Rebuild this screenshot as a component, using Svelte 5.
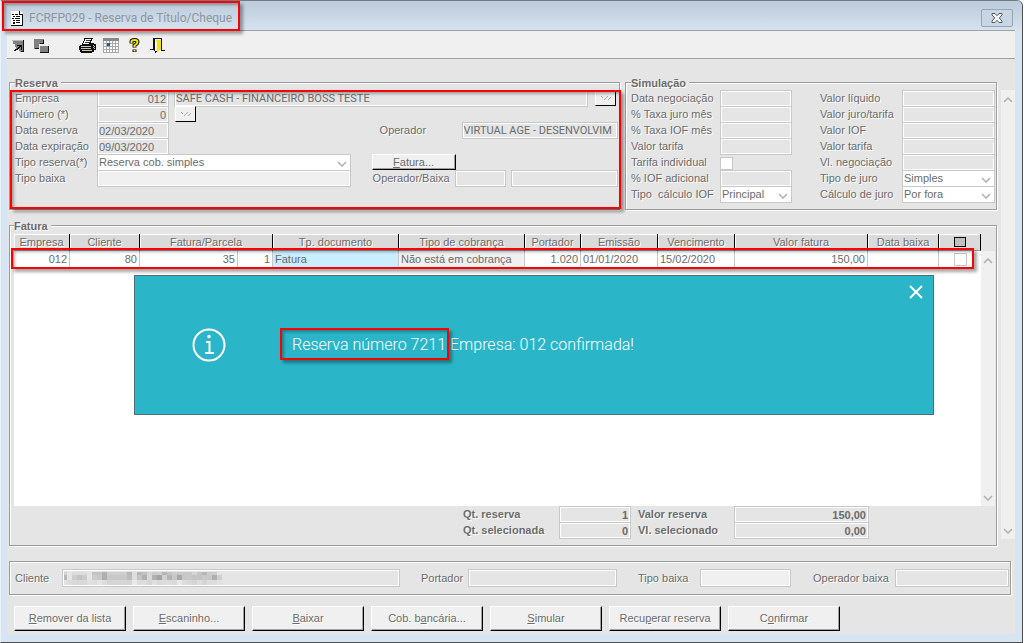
<script lang="ts">
  const invoiceCols = [56, 70, 98, 35, 126, 126, 56, 77, 77, 133, 71, 42]

  const actions = [
    ['', 'R', 'emover da lista'],
    ['', 'E', 'scaninho...'],
    ['', 'B', 'aixar'],
    ['Cob. b', 'a', 'ncária...'],
    ['', 'S', 'imular'],
    ['Recu', 'p', 'erar reserva'],
    ['C', 'o', 'nfirmar'],
  ]

  const simLeft = [
    { id: 'data-neg', label: 'Data negociação' },
    { id: 'taxa-juro', label: '% Taxa juro mês' },
    { id: 'taxa-iof', label: '% Taxa IOF mês' },
    { id: 'tarifa', label: 'Valor tarifa' },
  ]
  const simRight = [
    { id: 'liquido', label: 'Valor líquido' },
    { id: 'juro-tarifa', label: 'Valor juro/tarifa' },
    { id: 'valor-iof', label: 'Valor IOF' },
    { id: 'tarifa-2', label: 'Valor tarifa' },
    { id: 'vl-neg', label: 'Vl. negociação' },
  ]

  // grey levels of the masked customer name, one pair of hex digits per block
  const mask = [
    { y: 0, h: 3, cells: 'd3 e5 dd dd dd e5 c4 c4 b0 cf cf cf cf b8 dd b8 c2 d5 cc d0 b8 c4 cc c8 c8 c8 d5 c4 b8 cc cc e5' },
    { y: 3, h: 5, cells: 'b8 e5 cc c4 cc e5 cc c8 ae c8 c8 c8 c8 bc dd c4 b0 d8 b0 a4 d0 b4 c8 a8 c8 c8 c4 c4 c8 c8 b0 d0' },
    { y: 8, h: 5, cells: 'e2 dd d9 d9 d9 e0 dd e5 dd d5 d5 d5 d5 d5 ea dd dd d5 e0 d9 dd dd d9 ea dd d9 d5 dd d5 dd dd e2' },
  ]
</script>

{#snippet chevron(up = false)}
  <svg class="chevron" width="10" height="6" viewBox="0 0 10 6" aria-hidden="true">
    <path d={up ? 'M1 5 L5 1 L9 5' : 'M1 1 L5 5 L9 1'} />
  </svg>
{/snippet}

{#snippet lookup(label)}
  <button class="lookup" type="button" aria-label={label}>
    <svg width="12" height="8" viewBox="0 0 12 8" shape-rendering="crispEdges">
      <path d="M1 2h1v1h-1zM2 3h1v1h-1zM7 2h1v1h-1zM6 3h1v1h-1zM5 4h1v1h-1zM4 5h1v1h-1zM10 3h1v1h-1zM9 4h1v1h-1zM8 5h1v1h-1z" fill="#aaa" />
    </svg>
  </button>
{/snippet}

<div class="window">
  <header class="titlebar">
    <div class="title">
      <svg width="12" height="15" viewBox="0 0 12 15" shape-rendering="crispEdges">
        <path d="M0 0h9l3 3v12h-12z" fill="#fff" />
        <path d="M8 0h1v3h3v12h-1v-11h-3zM0 14h12v1h-12z" fill="#111" />
        <path d="M1 3h2v1h-2zM4 3h3v1h-3zM2 5h2v1h-2zM5 5h4v1h-4zM1 7h2v1h-2zM4 7h5v1h-5zM2 9h2v1h-2zM5 9h4v1h-4zM2 11h2v2h-2zM5 11h4v1h-4z" fill="#111" />
      </svg>
      <h1>FCRFP029 - Reserva de Título/Cheque</h1>
      <span class="mark title-mark"></span>
    </div>
    <button class="close" type="button" aria-label="Fechar">
      <svg width="12" height="10" viewBox="0 0 12 10">
        <path d="M1 .5h3l2 2.2 2-2.2h3v1.4l-2.7 3.1 2.7 3.1v1.4h-3l-2-2.2-2 2.2h-3v-1.4l2.7-3.1-2.7-3.1z" fill="#fafafa" stroke="#505768" />
      </svg>
    </button>
  </header>

  <nav class="toolbar">
    <button type="button" aria-label="Restaurar">
      <svg width="12" height="12" viewBox="0 0 12 12" shape-rendering="crispEdges">
        <path d="M0 0h12v12h-4v-1h-1v-2h-3v-2h-1v-3h-2v-3h-1z" fill="#808080" />
        <path d="M0 0h11v1h-11z" fill="#b8b8b8" />
        <path d="M11 0h1v12h-3v-1h2zM5 5h5v5h-1v-3h-1v1h-1v1h-1v1h-2v1h-2v-1h1v-1h2v-1h1v-1h1v-1h-2z" fill="#111" />
      </svg>
    </button>
    <button class="second" type="button" aria-label="Janelas">
      <svg width="15" height="14" viewBox="0 0 15 14" shape-rendering="crispEdges">
        <path d="M0 0h10v5h-5v5h-5z" fill="#808080" />
        <path d="M9 1h1v4h-4v-1h3zM1 9h4v1h-4z" fill="#111" />
        <path d="M6 7h8v6h-8z" fill="#808080" />
        <path d="M14 7h1v7h-9v-1h8z" fill="#111" />
      </svg>
    </button>
    <button class="print" type="button" aria-label="Imprimir">
      <svg width="17" height="15" viewBox="0 0 17 15" shape-rendering="crispEdges">
        <path d="M5 0h9v1h-1v2h-1v2h3v1h2v6h-2v2h-2v1h-11v-1h-1v-2h-1v-4h1v-1h2v-2h1v-2h1z" fill="#111" />
        <path d="M6 1h6v1h-1v2h-1v2h-6v-1h1v-2h1z" fill="#fff" />
        <path d="M7 2h4v1h-4zM6 4h4v1h-4z" fill="#333" />
        <path d="M2 8h10v1h-10zM2 10h10v1h-10zM3 12h10v1h-10zM14 7h1v1h-1zM15 8h1v1h-1zM14 9h1v1h-1zM15 10h1v1h-1z" fill="#c4c4c4" />
        <path d="M9 10h2v1h-2z" fill="#e3d420" />
      </svg>
    </button>
    <button class="calendar" type="button" aria-label="Calendário">
      <svg width="16" height="15" viewBox="0 0 16 15" shape-rendering="crispEdges">
        <path d="M0 0h16v15h-16z" fill="#a8a8a8" />
        <path d="M0 0h16v3h-16z" fill="#888" />
        {#each [3, 6, 9, 12] as y}
          {#each [1, 4, 7, 10, 13] as x}
            <rect {x} {y} width="2" height="2" fill="#fff" />
          {/each}
        {/each}
        <rect x="4" y="5" width="3" height="3" fill="#0a64a5" />
      </svg>
    </button>
    <button class="help" type="button" aria-label="Ajuda">
      <svg width="11" height="15" viewBox="0 0 11 15">
        <path d="M2.5 5.5V3.5Q2.5 2 5.5 2T8.5 4Q8.5 5.5 5.500 7.500V9.500M5.500 11.500V14" fill="none" stroke="#111" stroke-width="4" />
        <path d="M2.500 5V3.500Q2.500 2 5.500 2T8.500 4Q8.500 5.500 5.500 7.500V9M5.500 12V13.500" fill="none" stroke="#f4e400" stroke-width="2" />
      </svg>
    </button>
    <button class="exit" type="button" aria-label="Sair">
      <svg width="15" height="15" viewBox="0 0 15 15" shape-rendering="crispEdges">
        <path d="M3 0h9v12h3v1h-4v-12h-7v11h-4v-1h3z" fill="#111" />
        <path d="M4 1h1v1h1v11h2v1h-2v1h-1v-2h-1z" fill="#111" />
        <path d="M6 2h5v10h-2v1h-1v1h-1v-11h-1z" fill="#f4e400" />
        <path d="M5 2h1v11h-1z" fill="#fff" />
      </svg>
    </button>
  </nav>

  <main>
    <div class="work">
      <div class="groups">
        <div class="top">
          <fieldset class="reserva">
            <legend>Reserva</legend>
            <div class="row">
              <label for="empresa">Empresa</label>
              <input id="empresa" class="num short" value="012" readonly />
              <input class="grow desc caps" aria-label="Nome da empresa" value="SAFE CASH - FINANCEIRO BOSS TESTE" readonly />
              {@render lookup('Buscar empresa')}
            </div>
            <div class="row">
              <label for="numero">Número (*)</label>
              <input id="numero" class="num short" value="0" readonly />
              {@render lookup('Buscar reserva')}
            </div>
            <div class="halves">
              <div class="half">
                <div class="row">
                  <label for="dt-reserva">Data reserva</label>
                  <input id="dt-reserva" class="short date" value="02/03/2020" readonly />
                </div>
                <div class="row">
                  <label for="dt-exp">Data expiração</label>
                  <input id="dt-exp" class="short date" value="09/03/2020" readonly />
                </div>
                <div class="row">
                  <label for="tipo-reserva">Tipo reserva(*)</label>
                  <span class="select grow">
                    <select id="tipo-reserva"><option>Reserva cob. simples</option></select>
                    {@render chevron()}
                  </span>
                </div>
                <div class="row">
                  <label for="tipo-baixa">Tipo baixa</label>
                  <input id="tipo-baixa" class="grow light" readonly />
                </div>
              </div>
              <div class="operator">
                <div class="row">
                  <label class="op" for="operador">Operador</label>
                  <input id="operador" class="grow caps" value="VIRTUAL AGE - DESENVOLVIM" readonly />
                </div>
                <div class="row"></div>
                <div class="row">
                  <button class="raised invoice" type="button"><u>F</u>atura...</button>
                </div>
                <div class="row">
                  <label class="op-baixa" for="op-baixa">Operador/Baixa</label>
                  <input id="op-baixa" class="code" readonly />
                  <input class="grow" aria-label="Nome do operador" readonly />
                </div>
              </div>
            </div>
            <span class="mark reserva-mark"></span>
          </fieldset>

          <fieldset class="simulacao">
            <legend>Simulação</legend>
            <div class="sim-col">
              {#each simLeft as f}
                <div class="row">
                  <label for={f.id}>{f.label}</label>
                  <input id={f.id} class="grow" readonly />
                </div>
              {/each}
              <div class="row check">
                <label for="tarifa-ind">Tarifa individual</label>
                <input id="tarifa-ind" type="checkbox" />
              </div>
              <div class="row">
                <label for="iof-ad">% IOF adicional</label>
                <input id="iof-ad" class="grow" readonly />
              </div>
              <div class="row">
                <label for="calc-iof">Tipo&nbsp; cálculo IOF</label>
                <span class="select grow">
                  <select id="calc-iof"><option>Principal</option></select>
                  {@render chevron()}
                </span>
              </div>
            </div>
            <div class="sim-col right">
              {#each simRight as f}
                <div class="row">
                  <label for={f.id}>{f.label}</label>
                  <input id={f.id} class="grow" readonly />
                </div>
              {/each}
              <div class="row">
                <label for="tipo-juro">Tipo de juro</label>
                <span class="select grow">
                  <select id="tipo-juro"><option>Simples</option></select>
                  {@render chevron()}
                </span>
              </div>
              <div class="row">
                <label for="calc-juro">Cálculo de juro</label>
                <span class="select grow">
                  <select id="calc-juro"><option>Por fora</option></select>
                  {@render chevron()}
                </span>
              </div>
            </div>
          </fieldset>
        </div>

        <fieldset class="fatura">
          <legend>Fatura</legend>
          <div class="list">
            <div class="sheet">
              <table>
                <colgroup>
                  {#each invoiceCols as w}
                    <col style="width: {w}px" />
                  {/each}
                </colgroup>
                <thead>
                  <tr>
                    <th>Empresa</th>
                    <th>Cliente</th>
                    <th colspan="2">Fatura/Parcela</th>
                    <th>Tp. documento</th>
                    <th>Tipo de cobrança</th>
                    <th>Portador</th>
                    <th>Emissão</th>
                    <th>Vencimento</th>
                    <th>Valor fatura</th>
                    <th>Data baixa</th>
                    <th><button class="check-all" type="button" aria-label="Marcar todos"></button></th>
                  </tr>
                </thead>
                <tbody>
                  <tr>
                    <td class="num">012</td>
                    <td class="num">80</td>
                    <td class="num">35</td>
                    <td class="num">1</td>
                    <td class="doc">Fatura</td>
                    <td class="cob">Não está em cobrança</td>
                    <td class="num">1.020</td>
                    <td>01/01/2020</td>
                    <td>15/02/2020</td>
                    <td class="num">150,00</td>
                    <td></td>
                    <td class="pick"><input type="checkbox" aria-label="Selecionar fatura" /></td>
                  </tr>
                </tbody>
              </table>
            </div>
            <div class="scroll inner">{@render chevron(true)}{@render chevron()}</div>
            <span class="mark row-mark"></span>

            <div class="message" role="alertdialog" aria-label="Mensagem">
              <svg class="info" width="34" height="34" viewBox="0 0 34 34" aria-hidden="true">
                <circle cx="17" cy="17" r="15.500" />
                <path d="M14 14h3.500v10.500M13 25h9" />
                <circle class="dot" cx="17" cy="8.500" r="1.800" />
              </svg>
              <p><span class="number">Reserva número 7211<span class="mark number-mark"></span></span> Empresa: 012 confirmada!</p>
              <button class="dismiss" type="button" aria-label="Fechar mensagem">
                <svg width="14" height="14" viewBox="0 0 14 14"><path d="M1 1L13 13M13 1L1 13" /></svg>
              </button>
            </div>
          </div>

          <div class="totals">
            <label for="qt-res">Qt. reserva</label>
            <input id="qt-res" value="1" readonly />
            <label class="value" for="vl-res">Valor reserva</label>
            <input id="vl-res" value="150,00" readonly />
            <label for="qt-sel">Qt. selecionada</label>
            <input id="qt-sel" value="0" readonly />
            <label class="value" for="vl-sel">Vl. selecionado</label>
            <input id="vl-sel" value="0,00" readonly />
          </div>
        </fieldset>
      </div>
      <div class="scroll outer">{@render chevron(true)}{@render chevron()}</div>
    </div>

    <section class="details">
      <label class="cliente" for="d-cliente">Cliente</label>
      <span class="masked">
        <input id="d-cliente" readonly />
        <svg width="160" height="13" viewBox="0 0 160 13" shape-rendering="crispEdges" aria-hidden="true">
          {#each mask as line}
            {#each line.cells.split(' ') as c, i}
              <rect x={i * 5 - 2} y={line.y} width="5" height={line.h} fill="#{c}{c}{c}" />
            {/each}
          {/each}
        </svg>
      </span>
      <label class="portador" for="d-portador">Portador</label>
      <input id="d-portador" class="portador-input" readonly />
      <label class="baixa" for="d-baixa">Tipo baixa</label>
      <input id="d-baixa" class="baixa-input light" readonly />
      <label class="op-d" for="d-operador">Operador baixa</label>
      <input id="d-operador" class="op-input" readonly />
    </section>

    <footer>
      {#each actions as [before, key, after]}
        <button class="raised" type="button">{before}<u>{key}</u>{after}</button>
      {/each}
    </footer>
  </main>
</div>

<style>
  :global(body) {
    margin: 0;
    background: #fff;
  }
  .window,
  .window * {
    box-sizing: border-box;
  }
  .window {
    display: flex;
    flex-direction: column;
    min-height: 100vh;
    margin-right: 2px;
    padding: 0 7px 8px 6px;
    background: #d7e5f2;
    border: 1px solid #4c4e52;
    border-left-color: #e8f0f8;
    border-top-color: #777c82;
    border-radius: 0 6px 0 0;
    font: 11px/16px "Liberation Sans", Arial, sans-serif;
    color: #6b6b6b;
  }
  button,
  input,
  select {
    margin: 0;
    font: inherit;
    color: inherit;
  }
  button {
    padding: 0;
    border: 0;
    background: none;
  }
  svg {
    display: block;
  }

  .titlebar {
    display: flex;
    justify-content: space-between;
    align-items: center;
    height: 29px;
    margin: 0 -7px 0 -6px;
    padding: 0 9px 0 10px;
    background: linear-gradient(#bccbda, #d5e2ef);
    border-radius: 0 6px 0 0;
  }
  .title {
    position: relative;
    display: flex;
    align-items: center;
    gap: 6px;
    padding-top: 5px;
  }
  h1 {
    margin: 0;
    font: 12px/20px Roboto, "Open Sans", sans-serif;
    color: #8d959e;
    white-space: nowrap;
  }
  .close {
    display: flex;
    align-items: center;
    justify-content: center;
    width: 32px;
    height: 18px;
    margin-top: 4px;
    border: 1px solid #99a5b2;
    border-radius: 2px;
    background: #c9d7e5;
  }

  .toolbar {
    display: flex;
    align-items: center;
    height: 29px;
    padding: 2px 0 0 5px;
    background: #f0f0f0;
    border-top: 1px solid #a0a0a0;
    border-bottom: 1px solid #a0a0a0;
  }
  .second {
    margin-left: 10px;
  }
  .print {
    margin-left: 30px;
  }
  .calendar {
    margin-left: 7px;
  }
  .help {
    margin-left: 10px;
  }
  .exit {
    margin-left: 10px;
  }

  main {
    display: flex;
    flex-direction: column;
    flex: 1;
    padding: 16px 0 3px 2px;
    background: #e5e5e5;
  }
  .work {
    display: flex;
    flex: 1;
    gap: 4px;
  }
  .groups {
    display: flex;
    flex-direction: column;
    flex: 1;
    min-width: 0;
    gap: 8px;
  }
  .top {
    display: flex;
    gap: 5px;
  }

  fieldset {
    position: relative;
    min-width: 0;
    margin: 0;
    padding: 0 4px;
    border: 1px solid #9c9c9c;
    box-shadow: 1px 1px 0 #fff, inset 1px 1px 0 #fff;
  }
  legend {
    height: 15px;
    padding: 0 3px 0 0;
    background: #e5e5e5;
    font-weight: bold;
    text-shadow: 1px 1px 0 #fff;
  }
  label {
    flex: none;
    text-shadow: 1px 1px 0 #fff;
    white-space: nowrap;
  }
  input {
    width: 100%;
    min-width: 0;
    height: 17px;
    padding: 0 2px;
    border: 1px solid #c8c8c8;
    border-radius: 0;
    outline: none;
    background: #e5e5e5;
    box-shadow: inset 0 0 0 1px #fff;
  }
  input.light {
    background: #f0f0f0;
  }
  input.date {
    padding: 0 1px;
  }
  input.caps {
    padding: 0 1px;
    font-family: Roboto, sans-serif;
  }
  input[type='checkbox'] {
    appearance: none;
    flex: none;
    width: 13px;
    height: 13px;
    background: #fff;
  }
  .num {
    text-align: right;
  }
  .row {
    display: flex;
    height: 16px;
  }
  .check {
    align-items: flex-end;
  }
  .grow {
    flex: 1;
  }

  .select {
    position: relative;
    display: flex;
    height: 17px;
  }
  select {
    appearance: none;
    width: 100%;
    height: 17px;
    padding: 0 1px;
    border: 1px solid #c8c8c8;
    border-radius: 0;
    background: #fff;
    line-height: 15px;
  }
  .select .chevron {
    position: absolute;
    right: 4px;
    top: 7px;
  }
  .chevron path {
    fill: none;
    stroke: #b0b0b0;
    stroke-width: 1.5;
  }

  .raised {
    background: #f0f0f0;
    border: 1px solid;
    border-color: #fff #000 #000 #fff;
    box-shadow: inset -1px -1px 0 #a0a0a0;
    white-space: nowrap;
  }
  .lookup {
    display: flex;
    align-items: center;
    justify-content: center;
    flex: none;
    width: 21px;
    height: 16px;
    background: #f0f0f0;
    border: 1px solid;
    border-color: #fff #000 #000 #fff;
  }

  .reserva {
    flex: 611 1 611px;
    padding-right: 1px;
    padding-left: 5px;
  }
  .reserva label {
    width: 82px;
  }
  .reserva .short {
    flex: none;
    width: 72px;
  }
  .row > .desc {
    margin: 0 7px 0 5px;
  }
  .reserva .short + .lookup {
    margin-left: 6px;
  }
  .reserva .desc + .lookup {
    margin-right: 2px;
  }
  .halves {
    display: flex;
    gap: 21px;
  }
  .half {
    flex: 335 1 0;
  }
  .operator {
    flex: 246 1 0;
  }
  .reserva .op {
    width: 90px;
    padding-left: 8px;
  }
  .reserva .op-baixa {
    width: 83px;
    padding-left: 1px;
  }
  .code {
    flex: none;
    width: 51px;
    margin-right: 5px;
  }
  .invoice {
    width: 84px;
    height: 16px;
    line-height: 14px;
  }

  .simulacao {
    display: flex;
    flex: 372 1 372px;
    gap: 28px;
    padding: 0 1px 7px 5px;
  }
  .sim-col {
    flex: 161 1 0;
  }
  .sim-col.right {
    flex: 175 1 0;
  }
  .simulacao label {
    width: 89px;
  }
  .simulacao .right label {
    width: 82px;
  }

  .fatura {
    display: flex;
    flex-direction: column;
    flex: 1;
    padding: 1px 2px 7px 4px;
  }
  .list {
    position: relative;
    display: flex;
    flex: 1;
    min-height: 240px;
  }
  .sheet {
    flex: 1;
    background: #fff;
  }
  table {
    width: 100%;
    table-layout: fixed;
    border-collapse: separate;
    border-spacing: 0;
  }
  th {
    height: 17px;
    padding: 0;
    background: #dadada;
    border-right: 1px solid #000;
    border-bottom: 1px solid #a0a0a0;
    box-shadow: inset 1px 1px 0 #fff;
    font-weight: normal;
    line-height: 16px;
    text-shadow: 1px 1px 0 #fff;
    white-space: nowrap;
  }
  td {
    height: 16px;
    padding: 0 2px;
    border-right: 1px solid #c8c8c8;
    line-height: 16px;
    white-space: nowrap;
  }
  .doc {
    background: #c8eeff;
  }
  .cob {
    background: #f0f0f0;
  }
  .check-all {
    display: block;
    width: 12px;
    height: 10px;
    margin: 0 auto;
    border: 1px solid #000;
    background: #c0c0c0;
  }
  .pick {
    border-right: 0;
  }
  .pick input {
    display: block;
    margin: 0 auto;
  }

  .scroll {
    display: flex;
    flex-direction: column;
    justify-content: space-between;
    align-items: center;
    flex: none;
    width: 14px;
    padding: 7px 0 5px;
    background: #f0f0f0;
  }
  .inner {
    margin-top: 17px;
  }
  .outer {
    margin: 15px 0 7px;
  }

  .message {
    position: absolute;
    top: 41px;
    right: 60px;
    left: 120px;
    display: flex;
    align-items: center;
    height: 140px;
    padding-left: 57px;
    border: 1px solid #4f6f75;
    background: #2ab6c8;
    color: #fff;
  }
  .info {
    fill: none;
    stroke: #fff;
    stroke-width: 2;
  }
  .info .dot {
    fill: #fff;
    stroke: none;
  }
  .message p {
    margin: 0 0 0 66px;
    font: 300 16px/24px Roboto, sans-serif;
    white-space: nowrap;
  }
  .number {
    position: relative;
  }
  .dismiss {
    position: absolute;
    top: 9px;
    right: 10px;
  }
  .dismiss path {
    stroke: #fff;
    stroke-width: 2;
  }

  .totals {
    display: grid;
    grid-template-columns: 96px 72px 103px 135px;
    grid-auto-rows: 16px;
    margin-left: 449px;
    font-weight: bold;
  }
  .totals input {
    text-align: right;
  }
  .totals .value {
    padding-left: 7px;
  }

  .details {
    display: flex;
    align-items: center;
    height: 34px;
    margin: 15px 4px 0 0;
    padding: 0 1px 0 5px;
    border: 1px solid #9c9c9c;
    box-shadow: 1px 1px 0 #fff, inset 1px 1px 0 #fff;
  }
  .details input {
    height: 18px;
  }
  .cliente {
    width: 47px;
  }
  .masked {
    position: relative;
    display: flex;
    flex: 338 1 338px;
  }
  .masked svg {
    position: absolute;
    top: 3px;
    left: 2px;
  }
  .portador {
    width: 68px;
    padding-left: 21px;
  }
  .details .portador-input {
    flex: 149 1 149px;
  }
  .baixa {
    width: 83px;
    padding-left: 21px;
  }
  .details .baixa-input {
    flex: 91 1 91px;
  }
  .op-d {
    width: 104px;
    padding-left: 22px;
  }
  .details .op-input {
    flex: 114 1 114px;
  }

  footer {
    display: flex;
    gap: 7px;
    padding: 11px 0 0 5px;
  }
  footer .raised {
    width: 112px;
    height: 25px;
    padding-bottom: 1px;
    text-shadow: 1px 1px 0 #fff;
  }

  .mark {
    position: absolute;
    border: 2px solid #f00;
    box-shadow: 3px 3px 3px rgba(0, 0, 0, 0.35), inset 2px 2px 3px rgba(0, 0, 0, 0.3);
    pointer-events: none;
  }
  .title-mark {
    top: -2px;
    right: -8px;
    bottom: -3px;
    left: -9px;
  }
  .reserva-mark {
    top: 0;
    right: -2px;
    bottom: 0;
    left: 0;
  }
  .row-mark {
    top: 14px;
    right: 20px;
    left: -3px;
    height: 21px;
  }
  .number-mark {
    top: -7px;
    right: -3px;
    bottom: -6px;
    left: -12px;
  }
</style>
